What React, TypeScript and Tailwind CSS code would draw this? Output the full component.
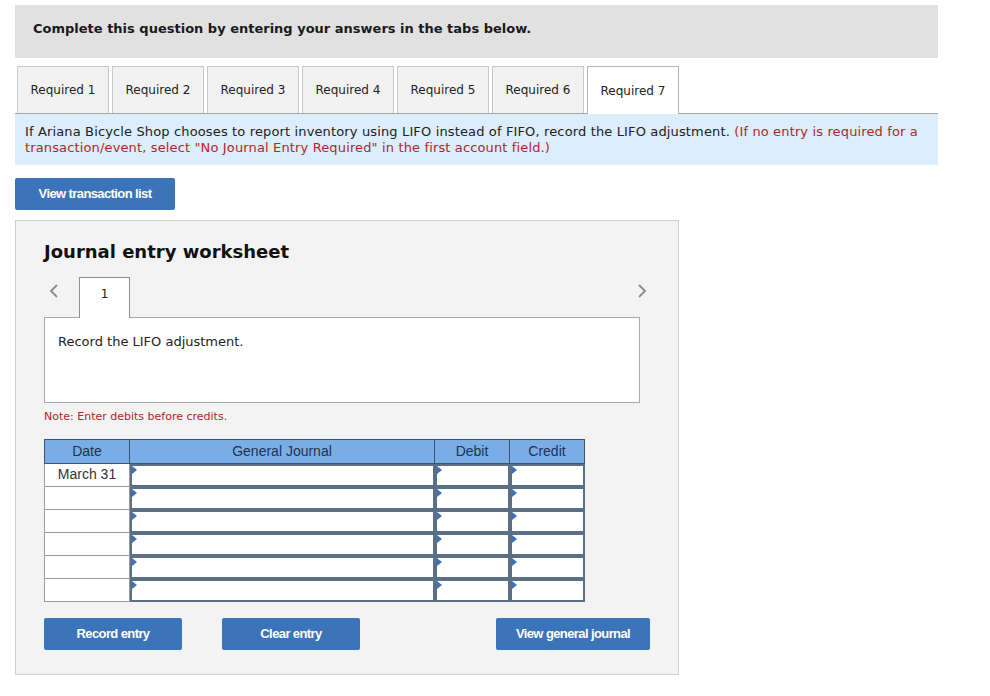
import React from "react";

const V = { fontFamily: '"DejaVu Sans", Verdana, sans-serif' };
const A = { fontFamily: '"Liberation Sans", Arial, sans-serif' };

function Tri() {
  return (
    <svg className="absolute left-0 top-0" width="5" height="8" viewBox="0 0 5 8">
      <polygon points="0,0 5,4 0,8" fill="#3d72b4" />
    </svg>
  );
}

function InputCell({ w }: { w: string }) {
  return (
    <div className={`relative ${w} h-full border-2 border-[#5b6f86] bg-white`}>
      <Tri />
    </div>
  );
}

function Btn({ children, w }: { children: React.ReactNode; w: string }) {
  return (
    <button
      className={`${w} shrink-0 h-[32px] rounded-[2px] bg-[#3b74b9] text-white text-[13px] font-bold tracking-[-0.6px]`}
      style={A}
    >
      {children}
    </button>
  );
}

export default function App() {
  const tabs = [1, 2, 3, 4, 5, 6, 7];
  const rows = ["March 31", "", "", "", "", ""];
  return (
    <div className="w-[990px] h-[696px] bg-white relative overflow-hidden" style={V}>
      <div className="pt-[5px] pl-[15px] w-[938px]">
        <div className="h-[53px] bg-[#e1e1e1] pl-[18px] pt-[11px]">
          <span className="text-[13px] font-bold text-[#1a1a1a]">
            Complete this question by entering your answers in the tabs below.
          </span>
        </div>

        <div className="mt-[8px] flex items-end gap-[3px] pl-[2px] border-b border-[#a6a6a6] h-[48px]">
          {tabs.map((t) => (
            <div
              key={t}
              className={`w-[92px] flex items-center justify-center text-[12px] text-[#222] border border-b-0 ${
                t === 7 ? "bg-white h-[48px] -mb-px border-[#b5b5b5]" : "bg-[#f2f2f2] h-[47px] border-[#c8c8c8]"
              }`}
            >
              Required {t}
            </div>
          ))}
        </div>

        <div className="bg-[#dcedfb] h-[51px] px-[10px] pt-[10px] text-[13px] leading-[16px] tracking-[0.14px] text-[#222]">
          <p>
            If Ariana Bicycle Shop chooses to report inventory using LIFO instead of FIFO, record the LIFO adjustment.{" "}
            <span className="text-[#b2262b]">
              (If no entry is required for a transaction/event, select "No Journal Entry Required" in the first account
              field.)
            </span>
          </p>
        </div>

        <div className="mt-[13px]">
          <Btn w="w-[160px]">View transaction list</Btn>
        </div>

        <div className="mt-[10px] w-[664px] h-[455px] bg-[#f3f3f3] border border-[#cfcfcf] pl-[28px] pr-[38px] pt-[18px]">
          <div className="text-[18px] font-bold text-[#111] leading-[26px]">Journal entry worksheet</div>

          <div className="mt-[11px] relative h-[41px] flex items-end">
            <svg className="absolute left-[4px] top-[7px]" width="12" height="16" viewBox="0 0 12 16">
              <polyline points="9,2 3,8 9,14" fill="none" stroke="#8a8a8a" strokeWidth="1.8" />
            </svg>
            <div className="ml-[35px] w-[51px] h-[41px] bg-white border border-b-0 border-[#8f8f8f] flex items-start justify-center pt-[7px] text-[12px] text-[#222] relative z-10 -mb-px">
              1
            </div>
            <svg className="absolute right-[-8px] top-[7px]" width="12" height="16" viewBox="0 0 12 16">
              <polyline points="3,2 9,8 3,14" fill="none" stroke="#8a8a8a" strokeWidth="1.8" />
            </svg>
          </div>
          <div className="w-[596px] h-[86px] bg-white border border-[#a9a9a9] pl-[13px] pt-[14px] text-[13px] text-[#222]">
            Record the LIFO adjustment.
          </div>

          <div className="mt-[6px] text-[11px] text-[#b2262b]">Note: Enter debits before credits.</div>

          <div className="mt-[13px] w-[541px]" style={A}>
            <div className="flex h-[25px] bg-[#7aade6] border border-[#3e536b] text-[14px] text-[#1d3450]">
              <div className="w-[85px] flex items-center justify-center border-r border-[#3e536b]">Date</div>
              <div className="w-[305px] flex items-center justify-center border-r border-[#3e536b]">General Journal</div>
              <div className="w-[75px] flex items-center justify-center border-r border-[#3e536b]">Debit</div>
              <div className="flex-1 flex items-center justify-center">Credit</div>
            </div>
            {rows.map((r, i) => (
              <div key={i} className="flex h-[23px]">
                <div className="w-[86px] h-full bg-white border border-t-0 border-[#9a9a9a] flex items-center justify-center text-[14px] text-[#333]">
                  {r}
                </div>
                <InputCell w="w-[305px]" />
                <InputCell w="w-[75px]" />
                <InputCell w="w-[75px]" />
              </div>
            ))}
          </div>

          <div className="mt-[16px] flex w-[620px]">
            <Btn w="w-[138px]">Record entry</Btn>
            <div className="ml-[40px] shrink-0">
              <Btn w="w-[138px]">Clear entry</Btn>
            </div>
            <div className="ml-[136px] shrink-0">
              <Btn w="w-[154px]">View general journal</Btn>
            </div>
          </div>
        </div>
      </div>
    </div>
  );
}
